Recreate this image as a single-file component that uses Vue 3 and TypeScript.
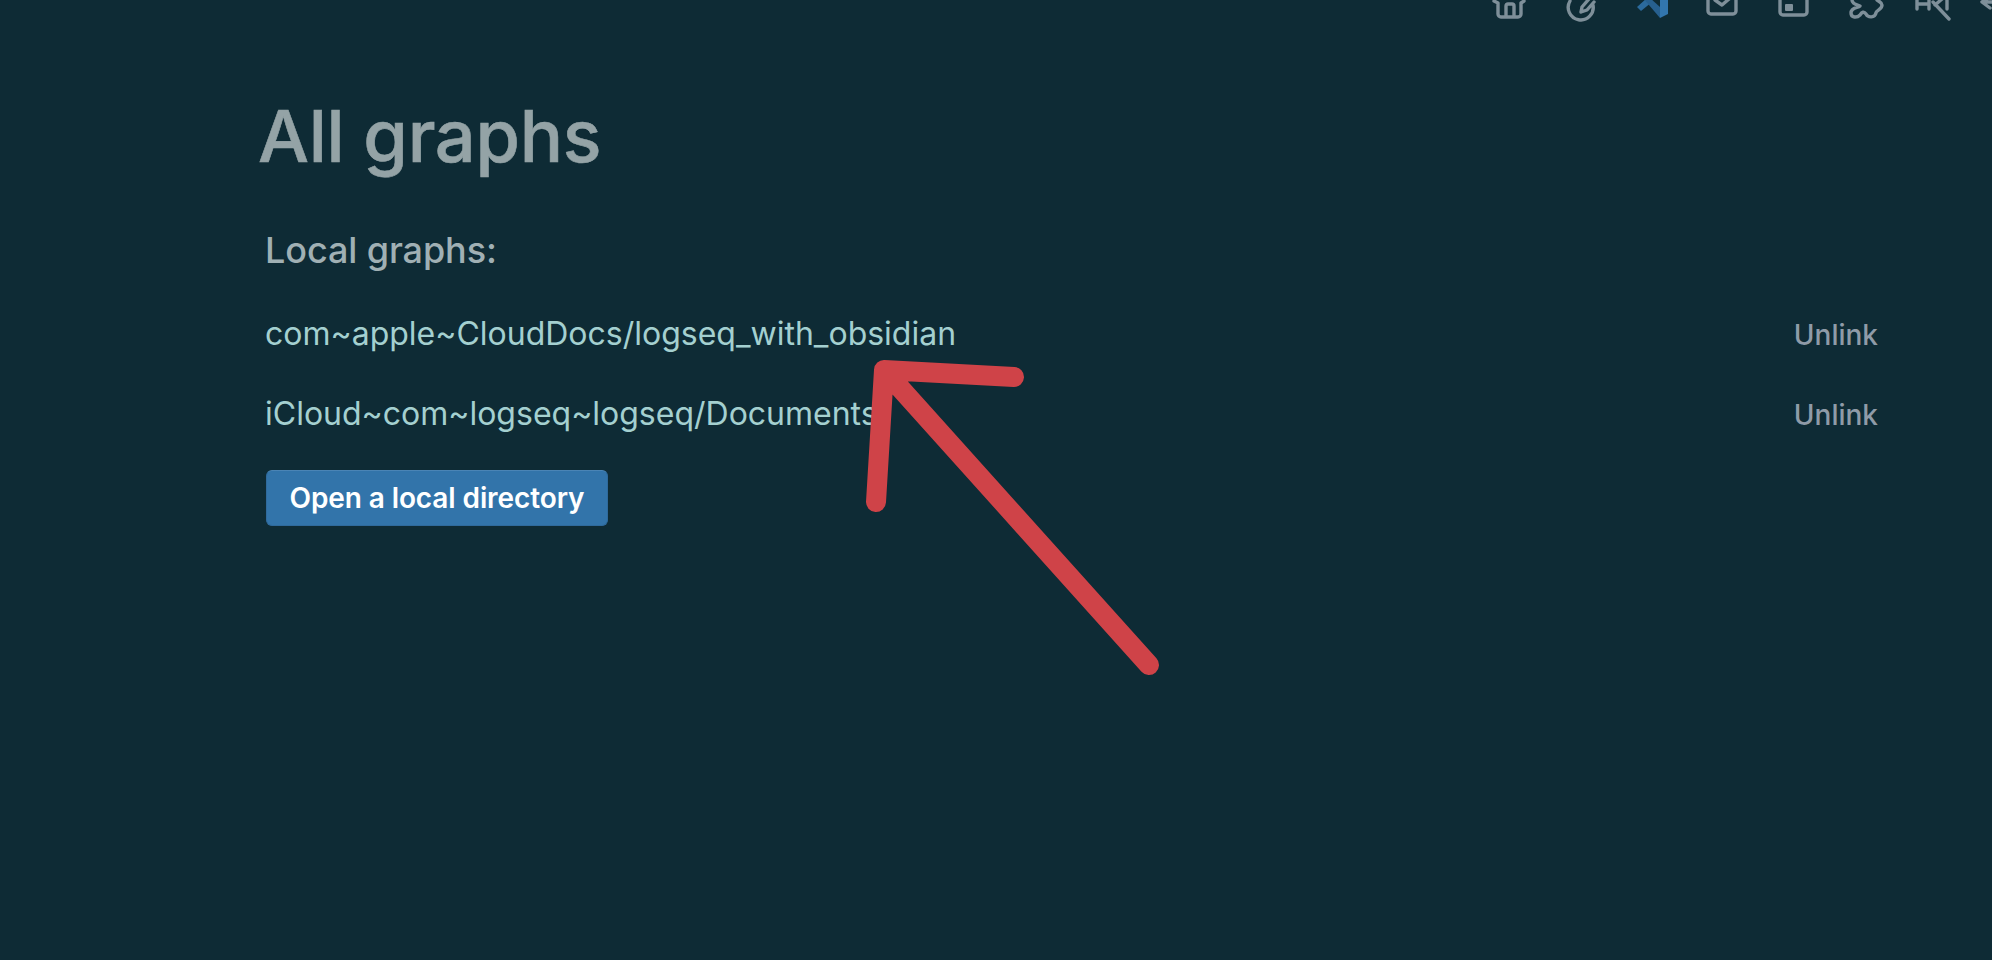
<script setup lang="ts">
const graphs: string[] = [
  'com~apple~CloudDocs/logseq_with_obsidian',
  'iCloud~com~logseq~logseq/Documents',
]
</script>

<template>
  <div class="page">
    <header class="toolbar">
      <svg class="icon" viewBox="1473 0 71 24"><path d="M1494 1L1498 3V14a3 3 0 0 0 3 3H1518a3 3 0 0 0 3-3V3L1524 1M1506 16V6q0-2 2-2h4q2 0 2 2V16" /></svg>
      <svg class="icon" viewBox="1544 0 71 24"><path d="M1570 1A12.5 12.5 0 1 0 1593 5M1581 12L1582 7L1589-1M1581 12L1587 10L1594 2" /></svg>
      <svg class="icon" viewBox="1615 0 71 24">
        <polygon class="vs-a" points="1637,7 1647,-2 1652,2 1641,11" />
        <polygon class="vs-b" points="1643,-2 1650,-2 1660,7 1660,18" />
        <polygon class="vs-c" points="1660,-2 1668,-2 1668,14 1660,18" />
      </svg>
      <svg class="icon" viewBox="1686 0 71 24"><path d="M1708-1V11a3 3 0 0 0 3 3H1733a3 3 0 0 0 3-3V-1M1715 0L1722 5L1729-1" /></svg>
      <svg class="icon" viewBox="1757 0 71 24"><path d="M1780-1V12a3 3 0 0 0 3 3H1804a3 3 0 0 0 3-3V-1" /><rect class="dot" x="1785" y="4" width="8" height="7" rx="1" /></svg>
      <svg class="icon" viewBox="1828 0 71 24"><path d="M1852 0C1852 4 1857 5 1860 6C1858 8 1851 7 1851 13C1851 18 1857 18 1860 15C1862 12 1864 11 1866 14C1868 18 1875 18 1876 13C1876 10 1882 10 1882 5C1882 2 1878 1 1877 0" /></svg>
      <svg class="icon" viewBox="1899 0 71 24"><path d="M1917-1V9M1917 4H1929M1929-1V9M1935 5L1942-1M1947 0V9M1933 2L1949 19" /></svg>
      <svg class="icon" viewBox="1970 0 71 24"><path d="M1990-3L1982 2L1990 8M1984 2H1996" /></svg>
    </header>

    <main class="content">
      <h1 class="title">All graphs</h1>
      <section class="graphs">
        <h2 class="subtitle">Local graphs:</h2>
        <div v-for="g in graphs" :key="g" class="row">
          <a class="path">{{ g }}</a>
          <a class="unlink">Unlink</a>
        </div>
        <button class="open" type="button">Open a local directory</button>
      </section>
    </main>

    <svg class="arrow" viewBox="0 0 1992 960">
      <path d="M1149 665L884 370M1014 377L884 370L876 502" />
    </svg>
  </div>
</template>

<style>
html, body { margin: 0; background: #0e2b35; }
</style>

<style scoped>
.page {
  position: relative;
  width: 1992px;
  height: 960px;
  overflow: hidden;
  background: #0e2b35;
  font-family: Inter, "Liberation Sans", sans-serif;
}
.toolbar {
  display: flex;
  height: 24px;
  padding-left: 1473px;
}
.icon {
  width: 71px;
  height: 24px;
  flex: none;
  fill: none;
  stroke: #7e8f99;
  stroke-width: 3.4;
  stroke-linecap: round;
  stroke-linejoin: round;
}
.icon .dot { fill: #7e8f99; stroke: none; }
.icon polygon { stroke: none; }
.vs-a { fill: #2b6a9c; }
.vs-b { fill: #27608f; }
.vs-c { fill: #3276ae; }
.content {
  padding: 66px 0 0 258px;
  width: 1620px;
}
.title {
  margin: 0;
  font-size: 72px;
  line-height: 92px;
  font-weight: 500;
  letter-spacing: -0.3px;
  -webkit-text-stroke: 0.6px #94a3a6;
  color: #94a3a6;
}
.graphs {
  padding: 44px 0 0 8px;
}
.subtitle {
  margin: 0 0 19px -1px;
  font-size: 36px;
  line-height: 48px;
  font-weight: 500;
  letter-spacing: -0.1px;
  color: #a0b0b4;
}
.row {
  display: flex;
  justify-content: space-between;
  align-items: center;
  height: 80px;
}
.path { margin-left: -1px; font-size: 32px; color: #a4d0d0; }
.unlink { padding-top: 4px; font-size: 28px; color: #8f9ba8; font-weight: 500; }
.open {
  display: block;
  margin-top: 17px;
  width: 342px;
  height: 56px;
  padding: 0;
  border: 1px solid #2f6a9c;
  border-top-color: #4a84b5;
  border-radius: 6px;
  background: #3274aa;
  color: #fff;
  font: 600 28px Inter, sans-serif;
  letter-spacing: -0.1px;
}
.arrow {
  position: absolute;
  left: 0;
  top: 0;
  width: 1992px;
  height: 960px;
  fill: none;
  stroke: #cf4348;
  stroke-width: 20;
  stroke-linecap: round;
  stroke-linejoin: round;
}
</style>
